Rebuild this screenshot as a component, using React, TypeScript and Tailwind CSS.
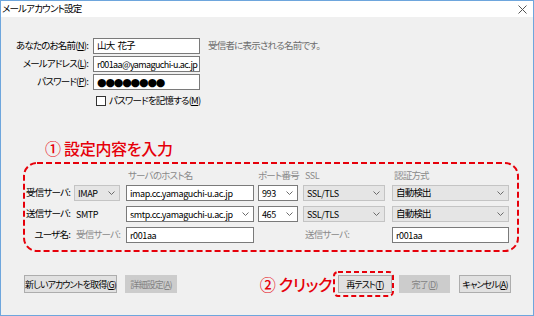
import React from "react";

const Chevron = ({ color = "#6b6b6b" }: { color?: string }) => (
  <svg width="7" height="4" viewBox="0 0 7 4" className="shrink-0">
    <polyline points="0.5,0.5 3.5,3.5 6.5,0.5" fill="none" stroke={color} strokeWidth="1" />
  </svg>
);

const TextBox = ({ w, children, className = "" }: { w: string; children?: React.ReactNode; className?: string }) => (
  <div className={`${w} h-[16px] bg-white border border-[#7a7a7a] flex items-center pl-[3px] leading-none text-black overflow-hidden ${className}`}>
    {children}
  </div>
);

const GraySelect = ({ w, children }: { w: string; children?: React.ReactNode }) => (
  <div className={`${w} h-[16px] bg-[#e5e5e5] border border-[#c4c4c4] flex items-center justify-between pl-[3px] pr-[4px] leading-none text-black`}>
    <span>{children}</span>
    <Chevron />
  </div>
);

const WhiteSelect = ({ w, children }: { w: string; children?: React.ReactNode }) => (
  <div className={`${w} h-[16px] bg-white border border-[#7a7a7a] flex items-center justify-between pl-[3px] pr-[4px] leading-none text-black overflow-hidden`}>
    <span>{children}</span>
    <Chevron />
  </div>
);

const Btn = ({ w, children, disabled = false }: { w: string; children: React.ReactNode; disabled?: boolean }) => (
  <div
    className={`${w} h-[18px] flex items-center justify-center text-[9px] leading-none border tracking-[-0.9px] ${
      disabled ? "bg-[#cccccc] border-[#cccccc] text-[#838383]" : "bg-[#e1e1e1] border-[#adadad] text-black"
    }`}
  >
    {children}
  </div>
);

const J = "text-[9.5px] tracking-[-0.8px]";
const L = "text-[9px] tracking-[-0.4px]";

export default function App() {
  return (
    <div className="w-[534px] h-[316px] border border-[#6ea6dd] flex flex-col font-['Noto_Sans_CJK_JP',sans-serif] [font-feature-settings:'palt'] text-black overflow-hidden whitespace-nowrap">
      {/* title bar */}
      <div className="h-[16px] bg-white flex items-center justify-between pl-[1px] pr-[6px] shrink-0">
        <span className={`${J} leading-none`}>メールアカウント設定</span>
        <svg width="9" height="9" viewBox="0 0 9 9">
          <path d="M0.5 0.5 L8.5 8.5 M8.5 0.5 L0.5 8.5" stroke="#555" strokeWidth="1" />
        </svg>
      </div>

      {/* body */}
      <div className="flex-1 bg-[#f0f0f0] flex flex-col">
        {/* top form */}
        <div className="pt-[21px] flex flex-col gap-[2px] leading-none">
          <div className="flex items-center h-[16px]">
            <div className={`w-[87px] text-right ${J}`}>あなたのお名前(<u>N</u>):</div>
            <TextBox w={`w-[107px] ml-[5px] ${J}`}>
              <span>山大</span>
              <span className="ml-[3px]">花子</span>
            </TextBox>
            <div className={`ml-[8px] text-[#6d6d6d] ${J}`}>受信者に表示される名前です。</div>
          </div>
          <div className="flex items-center h-[16px]">
            <div className={`w-[87px] text-right ${J}`}>メールアドレス(<u>L</u>):</div>
            <TextBox w="w-[107px] ml-[5px] text-[9px] tracking-[-0.6px]">r001aa@yamaguchi-u.ac.jp</TextBox>
          </div>
          <div className="flex items-center h-[16px]">
            <div className={`w-[87px] text-right ${J}`}>パスワード(<u>P</u>):</div>
            <TextBox w="w-[107px] ml-[5px]">
              <span className="font-['DejaVu_Sans',sans-serif] text-[11px] tracking-[-1.2px] leading-none">●●●●●●●●</span>
            </TextBox>
          </div>
          <div className="flex items-center h-[12px] mt-[3px] pl-[95px]">
            <div className="w-[10px] h-[10px] bg-white border border-[#333]" />
            <span className={`ml-[3px] ${J}`}>パスワードを記憶する(<u>M</u>)</span>
          </div>
        </div>

        {/* heading annotation */}
        <div className="mt-[32px] pl-[44px] h-[18px] flex items-center text-[16px] leading-none text-[#e6000a] font-medium tracking-[-0.3px]">
          ① 設定内容を入力
        </div>

        {/* server group */}
        <div className="relative ml-[22px] mt-[5px] w-[496px] h-[90px] pt-[10px] leading-none">
          <svg className="absolute inset-0 pointer-events-none" width="496" height="90">
            <rect x="1" y="1" width="494" height="88" rx="13" ry="13" fill="none" stroke="#e6000a" strokeWidth="2" strokeDasharray="6 3" />
          </svg>
          <div className="grid grid-cols-[51px_52px_132px_45px_89px_117px] gap-y-[5px] items-center">
            {/* headers */}
            <div className="h-[8px]" />
            <div />
            <div className={`h-[8px] flex items-end pl-[2px] text-[#8a8a8a] ${J}`}>サーバのホスト名</div>
            <div className={`h-[8px] flex items-end text-[#8a8a8a] ${J}`}>ポート番号</div>
            <div className={`h-[8px] flex items-end pl-[2px] text-[#8a8a8a] ${L}`}>SSL</div>
            <div className={`h-[8px] flex items-end pl-[2px] text-[#8a8a8a] ${J}`}>認証方式</div>

            {/* row 1 */}
            <div className={`text-right pr-[4px] ${J}`}>受信サーバ:</div>
            <GraySelect w={`w-[46px] ${L}`}>IMAP</GraySelect>
            <TextBox w={`w-[128px] ${L}`}>imap.cc.yamaguchi-u.ac.jp</TextBox>
            <WhiteSelect w={`w-[40px] ${L}`}>993</WhiteSelect>
            <GraySelect w={`w-[82px] ${L}`}>SSL/TLS</GraySelect>
            <GraySelect w={`w-[117px] ${J}`}>自動検出</GraySelect>

            {/* row 2 */}
            <div className={`text-right pr-[4px] ${J}`}>送信サーバ:</div>
            <div className={`pl-[2px] ${L}`}>SMTP</div>
            <WhiteSelect w={`w-[128px] ${L}`}>smtp.cc.yamaguchi-u.ac.jp</WhiteSelect>
            <WhiteSelect w={`w-[40px] ${L}`}>465</WhiteSelect>
            <GraySelect w={`w-[82px] ${L}`}>SSL/TLS</GraySelect>
            <GraySelect w={`w-[117px] ${J}`}>自動検出</GraySelect>

            {/* row 3 */}
            <div className={`text-right pr-[4px] ${J}`}>ユーザ名:</div>
            <div className={`pl-[2px] text-[#8a8a8a] ${J}`}>受信サーバ:</div>
            <TextBox w={`w-[128px] ${L}`}>r001aa</TextBox>
            <div />
            <div className={`pl-[2px] text-[#8a8a8a] ${J}`}>送信サーバ:</div>
            <TextBox w={`w-[117px] ${L}`}>r001aa</TextBox>
          </div>
        </div>

        {/* bottom buttons */}
        <div className="mt-[19px] flex items-center pl-[23px] pr-[22px]">
          <Btn w="w-[93px]">新しいアカウントを取得(<u>G</u>)</Btn>
          <div className="ml-[8px]">
            <Btn w="w-[52px]" disabled>
              詳細設定(<u>A</u>)
            </Btn>
          </div>
          <div className="ml-auto flex items-center">
            <span className="text-[16px] leading-none text-[#e6000a] font-medium tracking-[-0.3px]">② クリック</span>
            <div className="relative ml-[1px] pl-[5px] pr-[2px] py-[4px]">
              <svg className="absolute inset-0 pointer-events-none" width="61" height="26">
                <rect x="1" y="1" width="59" height="24" rx="4" ry="4" fill="none" stroke="#e6000a" strokeWidth="2" strokeDasharray="5 3" />
              </svg>
              <Btn w="w-[54px]">再テスト(<u>T</u>)</Btn>
            </div>
            <div className="ml-[5px]">
              <Btn w="w-[51px]" disabled>
                完了(<u>D</u>)
              </Btn>
            </div>
            <div className="ml-[9px]">
              <Btn w="w-[52px]">キャンセル(<u>A</u>)</Btn>
            </div>
          </div>
        </div>
      </div>
    </div>
  );
}
